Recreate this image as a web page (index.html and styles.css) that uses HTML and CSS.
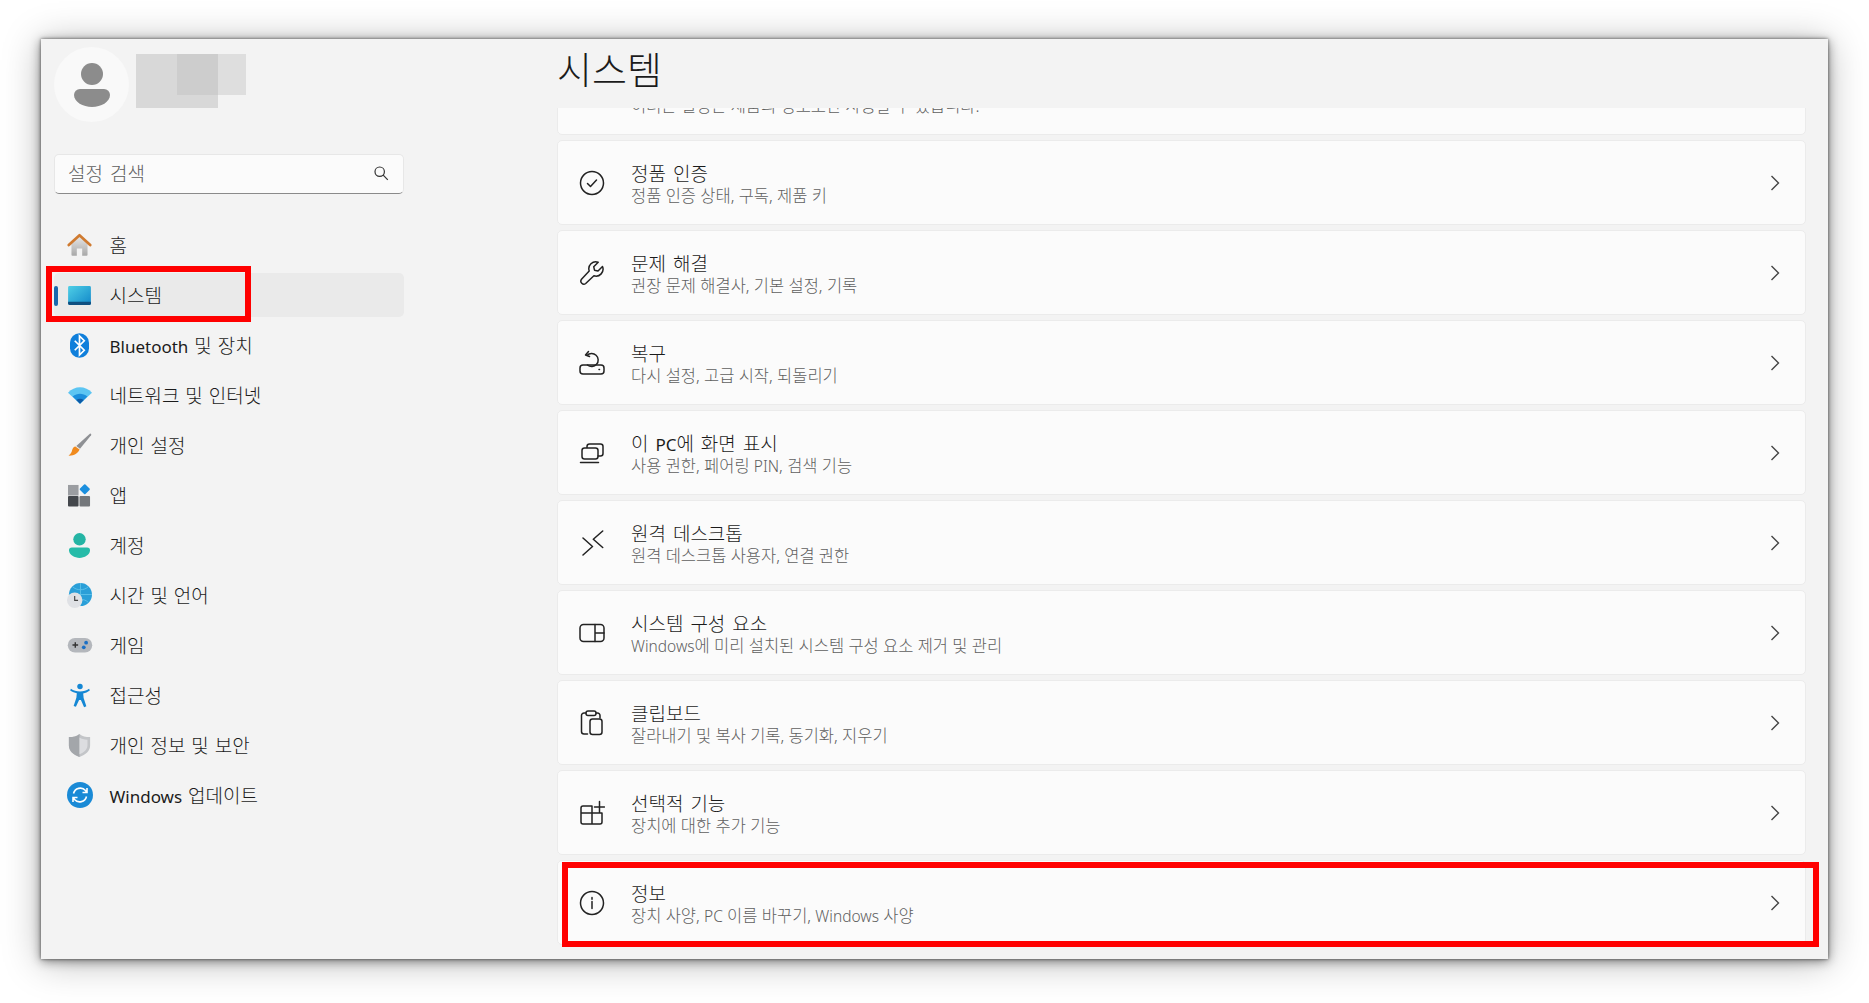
FILE: index.html
```html
<!DOCTYPE html>
<html lang="ko">
<head>
<meta charset="utf-8">
<title>시스템</title>
<link rel="stylesheet" href="styles.css">
</head>
<body>
<div class="window">
  <aside class="sidebar">
    <div class="profile">
      <div class="avatar">
        <svg width="36" height="44" viewBox="0 0 36 44"><circle cx="18" cy="11" r="11" fill="#8c8c8c"/><path d="M0 32a6 6 0 0 1 6-6h24a6 6 0 0 1 6 6c0 7-9 12-18 12S0 39 0 32z" fill="#8c8c8c"/></svg>
      </div>
      <div class="blur-name"><span class="blur-a"></span><span class="blur-b"></span></div>
    </div>
    <div class="search">
      <span class="search-text">설정 검색</span>
      <svg width="16" height="16" viewBox="0 0 16 16" fill="none" stroke="#333" stroke-width="1.2"><circle cx="6.7" cy="6.7" r="4.7"/><path d="M10.2 10.2l4.6 4.6"/></svg>
    </div>
    <nav class="nav">
      <div class="nav-item"><span class="nav-icon"><svg width="25" height="24" viewBox="0 0 28 26"><defs><linearGradient id="hb" x1="0" y1="0" x2="0" y2="1"><stop offset="0" stop-color="#e8e8e8"/><stop offset="1" stop-color="#a8a8a8"/></linearGradient></defs><path d="M5 11L14 3l9 8v13a1 1 0 0 1-1 1h-5v-8h-6v8H6a1 1 0 0 1-1-1z" fill="url(#hb)"/><path d="M2 13L14 2l12 11" fill="none" stroke="#cf7a30" stroke-width="3" stroke-linecap="round" stroke-linejoin="round"/></svg></span>홈</div>
      <div class="nav-item active"><span class="accent"></span><span class="nav-icon"><svg width="23" height="19" viewBox="0 0 24 20"><defs><linearGradient id="sb" x1="0" y1="0" x2="1" y2="1"><stop offset="0" stop-color="#4fcfe6"/><stop offset="1" stop-color="#1187c9"/></linearGradient></defs><rect width="24" height="20" rx="1.500" fill="url(#sb)"/><path d="M0 16.500h24v2a1.500 1.500 0 0 1-1.500 1.500H1.500A1.500 1.500 0 0 1 0 18.500z" fill="#0f4f80"/></svg></span>시스템<span class="mark mark-nav"></span></div>
      <div class="nav-item"><span class="nav-icon"><svg width="19" height="25" viewBox="0 0 20 26"><rect width="20" height="26" rx="10" fill="#0f7fdb"/><path d="M5 8l10 10-5 5V3l5 5L5 18" fill="none" stroke="#fff" stroke-width="1.800"/></svg></span><span><span class="en">Bluetooth</span> 및 장치</span></div>
      <div class="nav-item"><span class="nav-icon"><svg width="24" height="17" viewBox="0 0 26 18"><path d="M0 6C7-2 19-2 26 6L13 18z" fill="#5cc5f2"/><path d="M5 10c5-4 11-4 16 0l-8 8z" fill="#1c8fdc"/><path d="M9 14c2.500-2 5.500-2 8 0l-4 4z" fill="#0c5aa6"/></svg></span>네트워크 및 인터넷</div>
      <div class="nav-item"><span class="nav-icon"><svg width="24" height="24" viewBox="0 0 26 26"><path d="M24 0.500c1 0 1.500 1 1 2L13 17l-4-3z" fill="#8e9094"/><path d="M8 14.500l4.500 3.500c-1.500 4.500-7 7-12 6.500 3-2 3.500-4 4-6 .5-2.500 2-4 3.500-4z" fill="#f08a1d"/></svg></span>개인 설정</div>
      <div class="nav-item"><span class="nav-icon"><svg width="23" height="23" viewBox="0 0 24 24"><rect x="0" y="1" width="11" height="11" fill="#9b9da1"/><rect x="0" y="12.500" width="11" height="11" rx="1" fill="#44474c"/><rect x="12" y="12.500" width="11" height="11" rx="1" fill="#74777b"/><rect x="13.500" y="1.500" width="8" height="8" rx="1" transform="rotate(45 17.500 5.500)" fill="#1b8fde"/></svg></span>앱</div>
      <div class="nav-item"><span class="nav-icon"><svg width="21" height="25" viewBox="0 0 22 26"><circle cx="11" cy="6.500" r="6.500" fill="#24b4a4"/><path d="M0 18a3 3 0 0 1 3-3h16a3 3 0 0 1 3 3c0 5-6 8-11 8S0 23 0 18z" fill="#26bba8"/></svg></span>계정</div>
      <div class="nav-item"><span class="nav-icon"><svg width="25" height="25" viewBox="0 0 26 26"><circle cx="14" cy="12" r="12" fill="#2a9fd8"/><path d="M2 12h24M14 0v24M6 4c4 4 12 4 16 0M6 20c4-4 12-4 16 0" fill="none" stroke="#5bc0e8" stroke-width="1"/><circle cx="8" cy="18" r="8" fill="#dfe1e5"/><path d="M8 13.500V18h3.500" fill="none" stroke="#444" stroke-width="1.200"/></svg></span>시간 및 언어</div>
      <div class="nav-item"><span class="nav-icon"><svg width="26" height="16" viewBox="0 0 26 17"><rect width="26" height="15.500" y="1" rx="7.700" fill="#b4b7bc"/><path d="M5 8.500h6M8 5.500v6" stroke="#333" stroke-width="1.500"/><circle cx="19.500" cy="6" r="2" fill="#1b6fc4"/><circle cx="17" cy="11" r="2" fill="#1b6fc4"/></svg></span>게임</div>
      <div class="nav-item"><span class="nav-icon"><svg width="20" height="25" viewBox="0 0 22 26"><circle cx="11" cy="3.200" r="3" fill="#1487d4"/><path d="M1 5.500c3 2 6 3 10 3s7-1 10-3l.8 2c-2.500 1.800-4.800 2.800-7.300 3.300l.5 5 3 9-2.500 1L12 18h-2l-3.500 7.500-2.500-1 3-9 .5-5C5 10 2.700 9.300.2 7.500z" fill="#1487d4"/></svg></span>접근성</div>
      <div class="nav-item"><span class="nav-icon"><svg width="23" height="23" viewBox="0 0 24 26"><path d="M12 0c3 2.500 7 3.500 12 3.500V13c0 6-5 10.500-12 13C5 23.500 0 19 0 13V3.500C5 3.500 9 2.500 12 0z" fill="#c3c5c8"/><path d="M12 0v26C5 23.500 0 19 0 13V3.500C5 3.500 9 2.500 12 0z" fill="#a3a6aa"/><path d="M12 4c2 1.500 5 2.500 9 2.500V13c0 4.500-4 8-9 10z" fill="#dcdde0"/></svg></span>개인 정보 및 보안</div>
      <div class="nav-item"><span class="nav-icon"><svg width="26" height="26" viewBox="0 0 26 26"><circle cx="13" cy="13" r="13" fill="#1a8ad6"/><path d="M6.500 11.500A7 7 0 0 1 18.500 8.500l1.500 2M20 6v4.500h-4.500M19.500 14.500A7 7 0 0 1 7.500 17.500l-1.500-2M6 20v-4.500h4.500" fill="none" stroke="#fff" stroke-width="1.600"/></svg></span><span><span class="en">Windows</span> 업데이트</span></div>
    </nav>
  </aside>
  <main class="main">
    <h1 class="title">시스템</h1>
    <div class="list">
      <div class="card first"><span class="card-icon"></span><div class="card-text"><div class="card-title">&nbsp;</div><div class="card-sub">허려는 설정은 제품의 정보로만 사용할 수 있습니다.</div></div></div>
      <div class="card"><span class="card-icon"><svg width="26" height="26" viewBox="0 0 26 26" class="ic"><circle cx="13" cy="13" r="11.500"/><path d="M8.500 13.500l3 3 6-6.500"/></svg></span><div class="card-text"><div class="card-title">정품 인증</div><div class="card-sub">정품 인증 상태, 구독, 제품 키</div></div><svg class="chev" width="10" height="16" viewBox="0 0 10 16"><path d="M1.500 1l7 7-7 7"/></svg></div>
      <div class="card"><span class="card-icon"><svg width="26" height="26" viewBox="0 0 26 26" class="ic"><path d="M23.500 6.500l-4.500 4.500-3.500-.8-.8-3.500 4.500-4.500a7 7 0 0 0-9 8.800L2.500 19.300a3 3 0 0 0 4.200 4.200l8.200-7.700a7 7 0 0 0 8.600-9.300z"/></svg></span><div class="card-text"><div class="card-title">문제 해결</div><div class="card-sub">권장 문제 해결사, 기본 설정, 기록</div></div><svg class="chev" width="10" height="16" viewBox="0 0 10 16"><path d="M1.500 1l7 7-7 7"/></svg></div>
      <div class="card"><span class="card-icon"><svg width="26" height="26" viewBox="0 0 26 26" class="ic"><rect x="1" y="15" width="24" height="9" rx="3"/><path d="M8 5.500A6.500 6.500 0 1 1 8.500 15M9.500 1.500L6.500 5l4 1.500M20 19.500h.5"/></svg></span><div class="card-text"><div class="card-title">복구</div><div class="card-sub">다시 설정, 고급 시작, 되돌리기</div></div><svg class="chev" width="10" height="16" viewBox="0 0 10 16"><path d="M1.500 1l7 7-7 7"/></svg></div>
      <div class="card"><span class="card-icon"><svg width="26" height="26" viewBox="0 0 26 26" class="ic"><path d="M8 7.500V6.500a2.500 2.500 0 0 1 2.500-2.500h11a2.500 2.500 0 0 1 2.500 2.500v7a2.500 2.500 0 0 1-2.500 2.500H19"/><rect x="3" y="8" width="16" height="11" rx="2.500"/><path d="M1.500 22.500h18"/></svg></span><div class="card-text"><div class="card-title">이 <span class="en">PC</span>에 화면 표시</div><div class="card-sub">사용 권한, 페어링 <span class="en">PIN</span>, 검색 기능</div></div><svg class="chev" width="10" height="16" viewBox="0 0 10 16"><path d="M1.500 1l7 7-7 7"/></svg></div>
      <div class="card"><span class="card-icon"><svg width="26" height="26" viewBox="0 0 26 26" class="ic"><path d="M4 8l9.500 8.500L4 25M23.700 1l-9.400 8.300 9.400 8.200"/></svg></span><div class="card-text"><div class="card-title">원격 데스크톱</div><div class="card-sub">원격 데스크톱 사용자, 연결 권한</div></div><svg class="chev" width="10" height="16" viewBox="0 0 10 16"><path d="M1.500 1l7 7-7 7"/></svg></div>
      <div class="card"><span class="card-icon"><svg width="26" height="26" viewBox="0 0 26 26" class="ic"><rect x="1" y="4.500" width="24" height="17" rx="3.500"/><path d="M16 4.500v17M16 13h9"/></svg></span><div class="card-text"><div class="card-title">시스템 구성 요소</div><div class="card-sub"><span class="en">Windows</span>에 미리 설치된 시스템 구성 요소 제거 및 관리</div></div><svg class="chev" width="10" height="16" viewBox="0 0 10 16"><path d="M1.500 1l7 7-7 7"/></svg></div>
      <div class="card"><span class="card-icon"><svg width="26" height="26" viewBox="0 0 26 26" class="ic"><path d="M8.500 24H5a2.500 2.500 0 0 1-2.500-2.500v-16A2.500 2.500 0 0 1 5 3h2M17 3h1.500A2.500 2.500 0 0 1 21 5.500V8"/><rect x="7" y="1" width="10" height="4.500" rx="2"/><rect x="11" y="9" width="12" height="15.500" rx="2.500"/></svg></span><div class="card-text"><div class="card-title">클립보드</div><div class="card-sub">잘라내기 및 복사 기록, 동기화, 지우기</div></div><svg class="chev" width="10" height="16" viewBox="0 0 10 16"><path d="M1.500 1l7 7-7 7"/></svg></div>
      <div class="card"><span class="card-icon"><svg width="26" height="26" viewBox="0 0 26 26" class="ic"><path d="M13 6H4a2 2 0 0 0-2 2v14a2 2 0 0 0 2 2h17a2 2 0 0 0 2-2v-9H2M13 6v18M15.500 7h10M20.500 1.500v11"/></svg></span><div class="card-text"><div class="card-title">선택적 기능</div><div class="card-sub">장치에 대한 추가 기능</div></div><svg class="chev" width="10" height="16" viewBox="0 0 10 16"><path d="M1.500 1l7 7-7 7"/></svg></div>
      <div class="card"><span class="card-icon"><svg width="26" height="26" viewBox="0 0 26 26" class="ic"><circle cx="13" cy="13" r="11.500"/><path d="M13 11.500v7M13 7.500v1.800"/></svg></span><div class="card-text"><div class="card-title">정보</div><div class="card-sub">장치 사양, <span class="en">PC</span> 이름 바꾸기, <span class="en">Windows</span> 사양</div></div><svg class="chev" width="10" height="16" viewBox="0 0 10 16"><path d="M1.500 1l7 7-7 7"/></svg><span class="mark mark-card"></span></div>
    </div>
  </main>
</div>
</body>
</html>
```
FILE: styles.css
```css
html, body { margin: 0; height: 100%; }
body {
  background: #fff;
  padding: 39px 41px 43px;
  box-sizing: border-box;
  height: 1003px;
  overflow: hidden;
  font-family: "Noto Sans", "Noto Sans CJK KR", sans-serif;
  font-weight: 300;
  color: #1b1b1b;
}
.window {
  height: 920px;
  display: flex;
  background: #f3f3f3;
  box-shadow: 0 0 3px rgba(0,0,0,.55), 0 2px 10px rgba(0,0,0,.45), 0 3px 36px rgba(0,0,0,.28);
}
.sidebar {
  width: 516px;
  flex: none;
  box-sizing: border-box;
  padding: 8px 153px 0 13px;
}
.profile { display: flex; height: 75px; }
.avatar {
  width: 75px; height: 75px; border-radius: 50%;
  background: #f9f9f9;
  display: flex; align-items: center; justify-content: center;
}
.blur-name { position: relative; margin: 7px 0 0 7px; width: 110px; height: 54px; }
.blur-a { position: absolute; left: 0; top: 0; width: 82px; height: 54px; background: #d8d8d8; }
.blur-b { position: absolute; left: 41px; top: 0; width: 69px; height: 41px; background: rgba(190,190,190,.4); }
.search {
  margin-top: 32px;
  height: 40px;
  box-sizing: border-box;
  background: #fbfbfb;
  border: 1px solid #e7e7e7;
  border-bottom: 1px solid #8a8a8a;
  border-radius: 5px;
  display: flex; align-items: center; justify-content: space-between;
  padding: 0 14px 2px 13px;
}
.search-text { font-size: 19px; word-spacing: 2px; color: #5f5f5f; }
.nav { margin-top: 29px; display: flex; flex-direction: column; gap: 6px; }
.nav-item {
  position: relative;
  height: 44px;
  display: flex; align-items: center;
  font-size: 19px;
  word-spacing: 1px;
  border-radius: 5px;
}
.nav-item .en { font-size: 17px; font-weight: 400; }
.nav-item.active { background: #eaeaea; }
.nav-icon { width: 55.5px; flex: none; display: flex; justify-content: center; padding-right: 4.5px; box-sizing: border-box; }
.accent { position: absolute; left: 0; top: 13px; width: 4px; height: 20px; border-radius: 2px; background: #1a68ad; }
.mark { position: absolute; border: 6px solid #f00; box-sizing: border-box; pointer-events: none; }
.mark-nav { left: -8px; top: -7px; width: 205px; height: 56px; }
.main { flex: 1; min-width: 0; display: flex; flex-direction: column; padding-right: 9px; }
.title { margin: 0; height: 69px; flex: none; font-size: 38px; font-weight: 300; line-height: 60px; }
.list { flex: 1; overflow: clip; display: flex; flex-direction: column; gap: 5px; padding-right: 13px; position: relative; }
.card {
  position: relative;
  height: 85px; flex: none;
  box-sizing: border-box;
  background: #fbfbfb;
  border: 1px solid #ebebeb;
  border-radius: 5px;
  display: flex; align-items: center;
}
.card.first { margin-top: -58px; }
.card-icon { width: 73px; flex: none; display: flex; justify-content: center; padding-right: 5px; box-sizing: border-box; }
.card-text { flex: 1; padding-top: 4px; }
.card-title { font-size: 19px; word-spacing: 2px; line-height: 23px; }
.card-title .en { font-size: 17px; font-weight: 400; }
.card-sub { font-size: 16.5px; line-height: 20px; color: #5f5f5f; }
.card-sub .en { font-size: 15.5px; }
.ic { fill: none; stroke: #222; stroke-width: 1.500; stroke-linecap: round; stroke-linejoin: round; }
.chev { fill: none; stroke: #444; stroke-width: 1.400; margin-right: 25px; }
.mark-card { left: 4px; top: 1px; right: -14px; bottom: -3px; }
```
